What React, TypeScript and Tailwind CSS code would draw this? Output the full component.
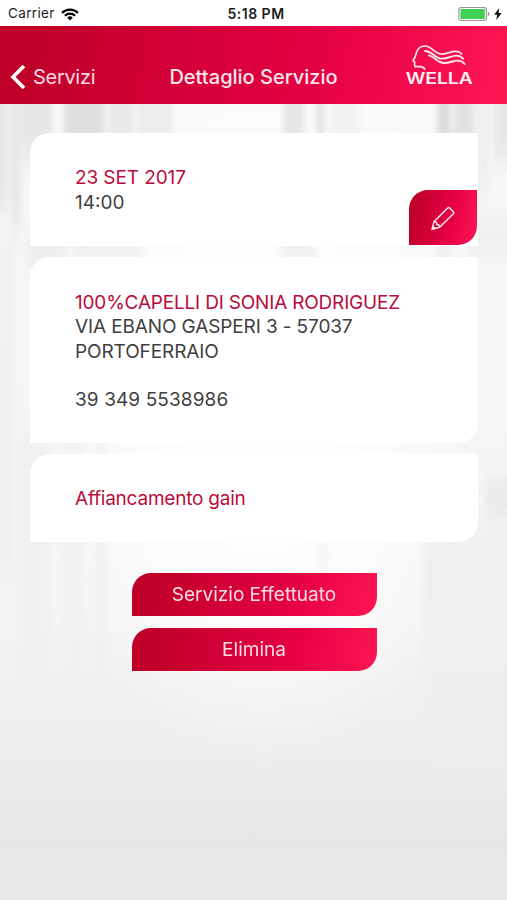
import type { ReactNode } from 'react'

interface Streak {
  x: number
  y: number
  w: number
  h: number
  fill: string
  opacity: number
}

// Soft curtains and furniture shapes behind the cards
const STREAKS: Streak[] = [
  { x: -10, y: 60, w: 18, h: 150, fill: '#dddbdb', opacity: 0.6 },
  { x: 12, y: 60, w: 8, h: 170, fill: '#dad7d8', opacity: 0.6 },
  { x: 22, y: 60, w: 30, h: 100, fill: '#e2e0e0', opacity: 0.8 },
  { x: 64, y: 60, w: 40, h: 110, fill: '#dddbdb', opacity: 0.9 },
  { x: 108, y: 60, w: 26, h: 100, fill: '#e6e5e5', opacity: 0.8 },
  { x: 138, y: 60, w: 34, h: 100, fill: '#eaeaea', opacity: 0.9 },
  { x: 284, y: 60, w: 20, h: 100, fill: '#e3e1e1', opacity: 0.9 },
  { x: 318, y: 60, w: 5, h: 100, fill: '#d3d1d1', opacity: 0.9 },
  { x: 330, y: 60, w: 30, h: 100, fill: '#f0f0f0', opacity: 0.8 },
  { x: 438, y: 60, w: 12, h: 100, fill: '#d8d5d6', opacity: 0.9 },
  { x: 454, y: 60, w: 20, h: 100, fill: '#e1dfdf', opacity: 0.9 },
  { x: 478, y: 60, w: 10, h: 130, fill: '#ebebeb', opacity: 0.9 },
  { x: 494, y: 60, w: 30, h: 100, fill: '#e4e2e2', opacity: 0.8 },
  { x: 466, y: 222, w: 50, h: 28, fill: '#ececec', opacity: 0.9 },
  { x: 0, y: 244, w: 14, h: 330, fill: '#eeeeee', opacity: 0.8 },
  { x: 26, y: 236, w: 40, h: 26, fill: '#e9e8e8', opacity: 0.9 },
  { x: 72, y: 236, w: 70, h: 26, fill: '#ededed', opacity: 0.9 },
  { x: 282, y: 236, w: 34, h: 26, fill: '#ebeaea', opacity: 0.9 },
  { x: 436, y: 240, w: 14, h: 18, fill: '#e2e1e1', opacity: 0.9 },
  { x: 20, y: 430, w: 28, h: 240, fill: '#eeeeee', opacity: 0.7 },
  { x: 64, y: 430, w: 18, h: 240, fill: '#efefef', opacity: 0.7 },
  { x: 96, y: 430, w: 10, h: 240, fill: '#efefef', opacity: 0.8 },
  { x: 320, y: 530, w: 6, h: 50, fill: '#f2f2f2', opacity: 0.9 },
  { x: 424, y: 530, w: 100, h: 230, fill: '#eeeeee', opacity: 0.8 },
  { x: 486, y: 486, w: 34, h: 26, fill: '#e2e0e0', opacity: 0.8 },
]

function Backdrop() {
  return (
    <svg
      className="pointer-events-none absolute inset-0"
      width="507"
      height="900"
      viewBox="0 0 507 900"
      aria-hidden="true"
    >
      <defs>
        <linearGradient id="wall" x1="0" y1="104" x2="0" y2="900" gradientUnits="userSpaceOnUse">
          <stop offset="0" stopColor="#f8f8f8" />
          <stop offset="0.65" stopColor="#f4f4f4" />
          <stop offset="0.8" stopColor="#ededed" />
          <stop offset="0.92" stopColor="#e8e7e7" />
          <stop offset="1" stopColor="#e8e8e8" />
        </linearGradient>
        <radialGradient id="glow" cx="0.5" cy="0.5" r="0.5">
          <stop offset="0" stopColor="#fff" />
          <stop offset="0.6" stopColor="#fff" stopOpacity="0.65" />
          <stop offset="1" stopColor="#fff" stopOpacity="0" />
        </radialGradient>
        <filter id="soft" x="-20%" y="-20%" width="140%" height="140%">
          <feGaussianBlur stdDeviation="3 14" />
        </filter>
      </defs>
      <rect width="507" height="900" fill="url(#wall)" />
      <ellipse cx="262" cy="400" rx="225" ry="370" fill="url(#glow)" />
      <g filter="url(#soft)">
        {STREAKS.map((s, i) => (
          <rect key={i} x={s.x} y={s.y} width={s.w} height={s.h} fill={s.fill} opacity={s.opacity} />
        ))}
      </g>
    </svg>
  )
}

function StatusBar() {
  return (
    <div className="relative grid h-[26px] grid-cols-[1fr_80px_1fr] items-center bg-white pt-0.5 pr-[5px] pl-2 text-[#1d1d1f]">
      <div className="flex items-center gap-1.5">
        <span className="text-[13.5px] leading-none tracking-[0.35px]">Carrier</span>
        <svg width="18" height="13" viewBox="0 0 18 13" className="text-black">
          <g fill="none" stroke="currentColor" strokeWidth="2.2">
            <path d="M1 4.9a11.4 11.4 0 0 1 16 0" />
            <path d="M3.9 7.8a7.3 7.3 0 0 1 10.2 0" />
          </g>
          <path d="M9 12.4 6.2 9.7a4 4 0 0 1 5.6 0z" fill="currentColor" />
        </svg>
      </div>
      <span className="pl-0.5 text-center text-[14px] leading-none font-semibold tracking-[0.5px] whitespace-nowrap">5:18 PM</span>
      <div className="flex items-center justify-end gap-1">
        <svg width="32" height="15" viewBox="0 0 32 15">
          <rect x="0.8" y="0.3" width="27.6" height="13.2" rx="2.8" fill="#fff" stroke="#9b9b9b" strokeWidth="1.2" />
          <rect x="2.4" y="1.9" width="24.4" height="10" rx="1.2" fill="#3fcf55" />
          <path d="M29.8 4.7v4.4c1.1-.3 1.6-1.2 1.6-2.2s-.5-1.9-1.6-2.2z" fill="#9b9b9b" />
        </svg>
        <svg width="8" height="12" viewBox="0 0 8 12">
          <path d="M5.2 0 .2 6.700h3L2.2 12 7.800 4.900H4.600z" fill="#111" />
        </svg>
      </div>
    </div>
  )
}

function WellaLogo() {
  return (
    <svg width="80" height="54" viewBox="0 0 240 162" aria-label="Wella">
      <g fill="none" stroke="#ffeaf0" strokeLinecap="round" strokeLinejoin="round">
        <path
          strokeWidth="5"
          d="M74 93c-3-5-8-7-14-7H45c-3-3 0-8-1-14l-5-4c5-7 7-11 9-20 3-15 14-24 27-24 20 0 27 22 48 24 19 2 28-9 44-8 8 0 14 3 18 8"
        />
        <path strokeWidth="5.5" d="M75 39c22 0 28 22 50 23 18 1 28-9 44-9 9 0 16 4 20 9" />
        <path strokeWidth="5.5" d="M87 52c18 4 24 23 46 23 17 0 27-7 41-7 9 0 16 5 20 10" />
      </g>
      <text
        x="17"
        y="137"
        fill="#ffeef3"
        fontFamily="Inter, sans-serif"
        fontSize="48"
        fontWeight="600"
        textLength="201"
        lengthAdjust="spacingAndGlyphs"
      >
        WELLA
      </text>
    </svg>
  )
}

function Header() {
  return (
    <header className="relative grid h-[78px] grid-cols-[130px_1fr_130px] items-end bg-linear-[100deg] from-[#c10029] from-8% via-[#e40045] via-62% to-[#ff1753]">
      <button className="flex h-[53px] items-center gap-2 pb-px pl-2.5 text-left text-[20px] text-[#ffd9e2]">
        <svg width="16" height="26" viewBox="0 0 16 26">
          <path d="M14 2 3 13l11 11" fill="none" stroke="#fff" strokeWidth="3.6" />
        </svg>
        <span className="-ml-px leading-none tracking-[-0.3px]">Servizi</span>
      </button>
      <h1 className="flex h-[53px] items-center justify-center pb-px text-[20px] leading-none font-medium whitespace-nowrap text-[#ffe6ec]">
        Dettaglio Servizio
      </h1>
      <div className="flex justify-end pr-[27px] pb-[12px]">
        <WellaLogo />
      </div>
    </header>
  )
}

function Card({ className, children }: { className: string; children: ReactNode }) {
  return (
    <section className={`relative rounded-tl-[20px] bg-white pl-[45px] text-[19px] leading-[24.5px] tracking-[-0.1px] text-[#3f3f41] ${className}`}>
      {children}
    </section>
  )
}

function ActionButton({ label }: { label: string }) {
  return (
    <button className="h-[43px] w-[245px] rounded-tl-[19px] rounded-br-[19px] bg-linear-[105deg] from-[#c00028] from-10% via-[#e50045] via-65% to-[#ff1552] pt-0.5 pb-px text-[19px] text-[#ffdce4]">
      {label}
    </button>
  )
}

export default function App() {
  return (
    <div className="relative h-[900px] w-[507px] overflow-hidden font-[Inter,sans-serif]">
      <Backdrop />
      <StatusBar />
      <Header />

      <main className="relative flex flex-col gap-[11px] pt-[29px] pr-[29px] pl-[30px]">
        <Card className="h-[113px] pt-[33px]">
          <p className="text-[#b80c3b]">23 SET 2017</p>
          <p className="tracking-normal">14:00</p>
          <button
            aria-label="Modifica"
            className="absolute right-px bottom-px flex h-[55px] w-[68px] items-center justify-center rounded-tl-[19px] rounded-br-[19px] bg-linear-[100deg] from-[#c00028] from-10% via-[#e50045] via-60% to-[#ff1552]"
          >
            <svg width="40" height="40" viewBox="0 0 120 120" fill="none" stroke="#ffe3ea" strokeWidth="4.5" strokeLinejoin="round">
              <path d="M27 94 33 71 74 30c2-2 4-2 6 0l11 11c2 2 2 4 0 6L50 88z" />
              <path d="M33 71c8 0 9 3 8 9 6-1 9 2 9 8" />
              <path d="m27 94 3-11 8 8z" fill="#ffe3ea" strokeWidth="2" />
            </svg>
          </button>
        </Card>

        <Card className="h-[186px] rounded-br-[20px] pt-[33.5px]">
          <p className="tracking-[-0.19px] text-[#b80c3b]">100%CAPELLI DI SONIA RODRIGUEZ</p>
          <p className="tracking-[-0.12px]">VIA EBANO GASPERI 3 - 57037</p>
          <p>PORTOFERRAIO</p>
          <p className="mt-[24px] tracking-[0.1px]">39 349 5538986</p>
        </Card>

        <Card className="h-[88px] rounded-br-[20px] pt-[33px]">
          <p className="tracking-[-0.22px] text-[#b80c3b]">Affiancamento gain</p>
        </Card>

        <div className="mt-5 flex flex-col items-center gap-3">
          <ActionButton label="Servizio Effettuato" />
          <ActionButton label="Elimina" />
        </div>
      </main>
    </div>
  )
}
